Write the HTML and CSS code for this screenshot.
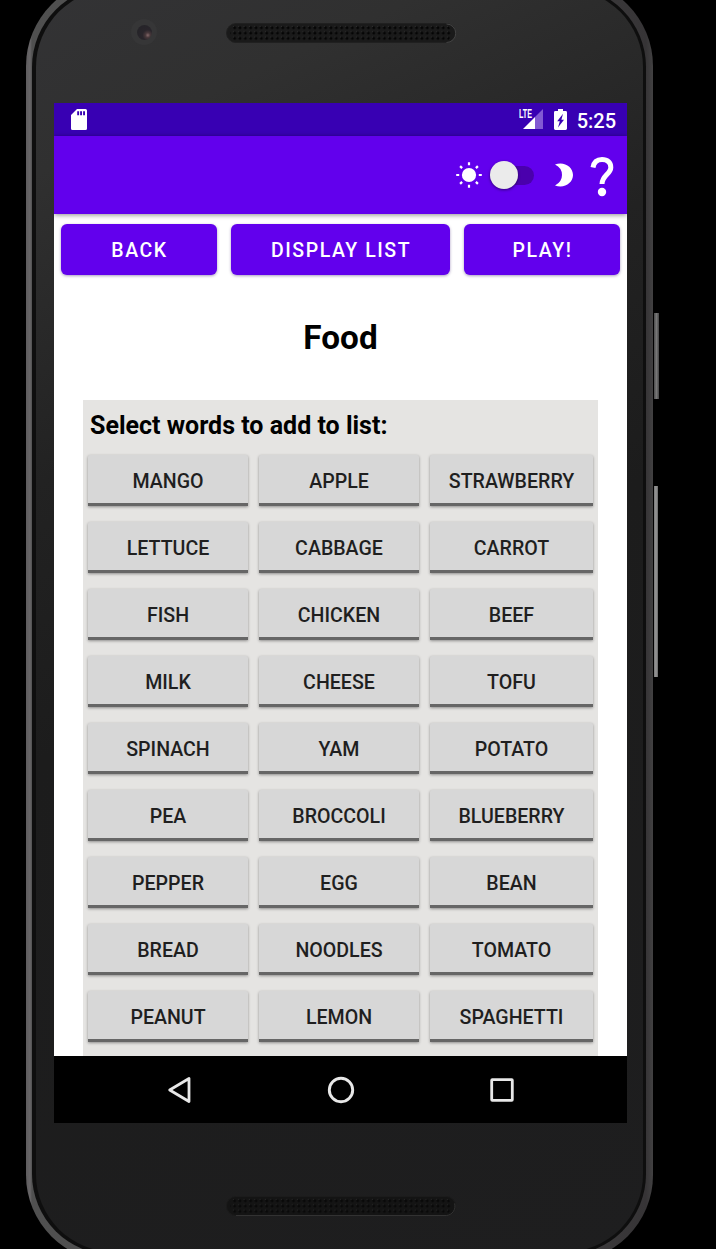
FILE: index.html
```html
<!DOCTYPE html>
<html lang="en">
<head>
<meta charset="utf-8">
<title>Food</title>
<link rel="stylesheet" href="styles.css">
</head>
<body>
<div class="phone">
  <div class="side power"></div>
  <div class="side volume"></div>
  <div class="gap-ring">
    <div class="face">
      <div class="bezel-top">
        <div class="camera"><span class="lens"></span></div>
        <svg class="grille" width="230" height="20" viewBox="0 0 230 20">
          <defs>
            <pattern id="holes" width="5.35" height="5.3" patternUnits="userSpaceOnUse" x="0.7" y="2.2">
              <circle cx="2.6" cy="2.6" r="1.4" fill="#050505"/>
              <circle cx="1.3" cy="1.2" r=".6" fill="#303030"/>
            </pattern>
          </defs>
          <rect x=".5" y=".5" width="229" height="19" rx="9.5" fill="#1a1a1a" stroke="#202020"/>
          <path d="M220.500 1a9.200 9.200 0 0 1 0 18.500" fill="none" stroke="#4c4c4c" stroke-width=".8"/>
          <rect x="4" y="2.200" width="221" height="15.900" rx="6" fill="url(#holes)"/>
        </svg>
      </div>
      <main class="screen">
        <header class="status">
          <svg class="sd" width="16" height="21" viewBox="0 0 16 21"><path fill="#fff" fill-rule="evenodd" d="M6 0h8.500Q16 0 16 1.500v18Q16 21 14.500 21h-13Q0 21 0 19.500V6zM6.200 2.200v4h1.900v-4zm2.900 0v4H11v-4zm3 0v4H14v-4z"/></svg>
          <div class="signal">
            <span class="lte">LTE</span>
            <svg width="20" height="20" viewBox="0 0 20 20"><path fill="#8259d3" d="M20 0v20H12V8z"/><path fill="#fff" d="M12 8v12H0z"/></svg>
          </div>
          <svg class="battery" width="13" height="21" viewBox="0 0 13 21"><path fill="#fff" fill-rule="evenodd" d="M4 0h5v2h2.600Q13 2 13 3.400v16.200Q13 21 11.600 21H1.400Q0 21 0 19.600V3.400Q0 2 1.400 2H4zM9 4.800 3.200 12.300h2.600L4 18.500 10 10.800H7.400z"/></svg>
          <time class="clock">5:25</time>
        </header>
        <div class="appbar">
          <svg class="sun" width="26" height="26" viewBox="-13 -13 26 26"><circle r="7.100" fill="#fff"/><path stroke="#fff" stroke-width="2.200" d="M0-12.800v3M0 12.800v-3M-12.800 0h3M12.800 0h-3M-8.900-8.900l2 2M8.900-8.900l-2 2M-8.900 8.900l2-2M8.900 8.900l-2-2"/></svg>
          <div class="switch"><span class="thumb"></span></div>
          <svg class="moon" width="18" height="24" viewBox="0 0 18 24"><path fill="#fff" d="M0 1.600C9-2 18 4 18 12S9 26 0 22.400Q7 19 7 12T0 1.600z"/></svg>
          <svg class="help" width="24" height="41" viewBox="0 0 24 41"><path fill="none" stroke="#fff" stroke-width="5" d="M3 11.500C3.800 6.500 7 3.500 12 3.500c5.500 0 8.800 3.200 8.800 8 0 6.500-8.800 8-8.800 16.500"/><circle cx="12" cy="36" r="4.200" fill="#fff"/></svg>
        </div>
        <section class="content">
          <nav class="actions">
            <button class="action">BACK</button>
            <button class="action">DISPLAY LIST</button>
            <button class="action">PLAY!</button>
          </nav>
          <h1 class="title">Food</h1>
          <div class="panel">
            <h2 class="prompt">Select words to add to list:</h2>
            <div class="words">
              <button class="word">MANGO</button><button class="word">APPLE</button><button class="word">STRAWBERRY</button>
              <button class="word">LETTUCE</button><button class="word">CABBAGE</button><button class="word">CARROT</button>
              <button class="word">FISH</button><button class="word">CHICKEN</button><button class="word">BEEF</button>
              <button class="word">MILK</button><button class="word">CHEESE</button><button class="word">TOFU</button>
              <button class="word">SPINACH</button><button class="word">YAM</button><button class="word">POTATO</button>
              <button class="word">PEA</button><button class="word">BROCCOLI</button><button class="word">BLUEBERRY</button>
              <button class="word">PEPPER</button><button class="word">EGG</button><button class="word">BEAN</button>
              <button class="word">BREAD</button><button class="word">NOODLES</button><button class="word">TOMATO</button>
              <button class="word">PEANUT</button><button class="word">LEMON</button><button class="word">SPAGHETTI</button>
            </div>
          </div>
        </section>
        <footer class="navbar">
          <svg width="28" height="28" viewBox="-14 -14 28 28"><path fill="none" stroke="#e8e8e8" stroke-width="2.800" stroke-linejoin="round" d="M-10.300 0 9-11.500v23z"/></svg>
          <svg width="28" height="28" viewBox="-14 -14 28 28"><circle r="11.700" fill="none" stroke="#e8e8e8" stroke-width="2.900"/></svg>
          <svg width="28" height="28" viewBox="-14 -14 28 28"><rect x="-10.300" y="-10.300" width="20.600" height="20.600" rx=".6" fill="none" stroke="#e8e8e8" stroke-width="2.800"/></svg>
        </footer>
      </main>
      <div class="bezel-bottom">
        <svg class="grille" width="230" height="20" viewBox="0 0 230 20">
          <rect x=".5" y=".5" width="229" height="19" rx="9.500" fill="#141414" stroke="#1b1b1b"/>
          <path d="M10 19.500h210.500a9.200 9.200 0 0 0 8-12" fill="none" stroke="#383838" stroke-width=".8"/>
          <rect x="4" y="2.200" width="221" height="15.900" rx="6" fill="url(#holes)" opacity=".75"/>
        </svg>
      </div>
    </div>
  </div>
</div>
</body>
</html>
```
FILE: styles.css
```css
* { box-sizing: border-box; }
html, body { height: 1249px; margin: 0; overflow: hidden; background: #000; }
body { display: flow-root; font-family: Roboto, sans-serif; }
button { border: 0; padding: 0; font-family: inherit; }
h1, h2 { margin: 0; }
svg { display: block; flex: none; }

.phone {
  position: relative;
  width: 627px;
  height: 1283px;
  margin: -21px 0 0 26px;
  padding: 7px 7px 7px 6px;
  border-radius: 87px;
  background: linear-gradient(90deg, #5e5c5e 0, #686668 4px, #505050 6px, #484848 70%, #363436 620px, #424142 627px);
}
.gap-ring {
  height: 100%;
  padding: 3px 3px 3px 4px;
  border-radius: 81px;
  background: #0e0e0e;
}
.face {
  height: 100%;
  border-radius: 78px;
  padding: 0 16px 0 18px;
  background: linear-gradient(155deg, #333335 0, #303030 12%, #222 32%, #1c1c1c 50%, #1e1e1f 100%);
}
.side { position: absolute; left: 628px; }
.power { top: 334px; width: 5px; height: 86px; background: linear-gradient(90deg, #4b4b4b, #777, #444); }
.volume { top: 507px; width: 4px; height: 191px; background: linear-gradient(90deg, #777, #999 50%, #666); }

.bezel-top {
  display: flex;
  align-items: flex-start;
  height: 114px;
  padding: 30px 0 0 77px;
}
.camera {
  display: grid;
  place-items: center;
  width: 26px;
  height: 26px;
  border-radius: 50%;
  background: #363637;
}
.lens {
  width: 15px;
  height: 15px;
  border-radius: 50%;
  background: radial-gradient(circle at 72% 68%, #84686a 0, #48383b 16%, #29252b 36%, #232327 100%);
}
.bezel-top .grille { margin: 4px 0 0 69px; }
.bezel-bottom { padding: 73px 0 0 172px; }

.screen {
  display: flex;
  flex-direction: column;
  width: 573px;
  height: 1020px;
  overflow: hidden;
  background: #fff;
}
.status {
  display: flex;
  flex: none;
  height: 33px;
  padding: 6px 11px 0 17px;
  background: #3800b3;
}
.signal { display: flex; margin-left: auto; }
.signal svg { margin-left: -12px; }
.lte {
  width: 16px;
  height: 12px;
  font: 700 12px/10px "Liberation Sans", sans-serif;
  color: #fff;
  transform: scaleX(.6);
  transform-origin: 0 0;
}
.battery { margin-left: 11px; }
.clock {
  width: 40px;
  margin-left: 9px;
  text-align: right;
  font-size: 20px;
  font-weight: 500;
  line-height: 24px;
  color: #fff;
  white-space: nowrap;
}
.appbar {
  display: flex;
  flex: none;
  align-items: center;
  justify-content: flex-end;
  height: 78px;
  padding: 0 13px 0 0;
  background: #6200ed;
  box-shadow: 0 1px 5px rgba(0, 0, 0, .45);
  z-index: 1;
}
.sun { margin-right: 8px; }
.switch {
  display: flex;
  align-items: center;
  width: 44px;
  height: 28px;
  padding-left: 6px;
  margin-right: 21px;
}
.switch::before {
  content: "";
  width: 38px;
  height: 19px;
  border-radius: 10px;
  background: #4a00ad;
}
.thumb {
  flex: none;
  width: 28px;
  height: 28px;
  margin-left: -44px;
  border-radius: 50%;
  background: #ebebeb;
  box-shadow: 0 1px 3px rgba(0, 0, 0, .5);
}
.moon { margin-right: 17px; }
.help { margin-top: 2px; }

.content {
  display: flex;
  flex-direction: column;
  height: 842px;
  overflow: hidden;
  padding: 9px 7px 0;
}
.actions {
  display: grid;
  flex: none;
  grid-template-columns: 156px 219px 156px;
  column-gap: 14px;
  height: 53px;
  padding: 1px 0;
}
.action {
  padding: 2px 0 0 1px;
  border-radius: 6px;
  background: #6200ed;
  box-shadow: 0 1px 3px rgba(40, 0, 100, .4);
  color: #fff;
  font-size: 19.500px;
  font-weight: 500;
  letter-spacing: 1.550px;
}
.title {
  flex: none;
  height: 124px;
  text-align: center;
  font-size: 33.300px;
  line-height: 124px;
}
.panel {
  flex: none;
  width: 515px;
  margin: 0 22px;
  padding: 10px 5px 30px;
  background: #e5e4e2;
}
.prompt {
  padding-left: 2px;
  font-size: 25px;
  line-height: 32px;
  white-space: nowrap;
}
.words {
  display: grid;
  grid-template-columns: 160px 160px 163px;
  grid-auto-rows: 51px;
  gap: 16px 11px;
  padding-top: 13px;
}
.word {
  padding: 5px 0 0;
  border-bottom: 3px solid #666;
  border-radius: 2px 2px 0 0;
  background: #d7d7d7;
  box-shadow: 0 1px 3px rgba(0, 0, 0, .38);
  color: #1f1f1f;
  font-size: 19.600px;
  font-weight: 500;
}

.navbar {
  display: flex;
  flex: none;
  align-items: center;
  justify-content: center;
  gap: 133px;
  height: 67px;
  background: #000;
}
```
